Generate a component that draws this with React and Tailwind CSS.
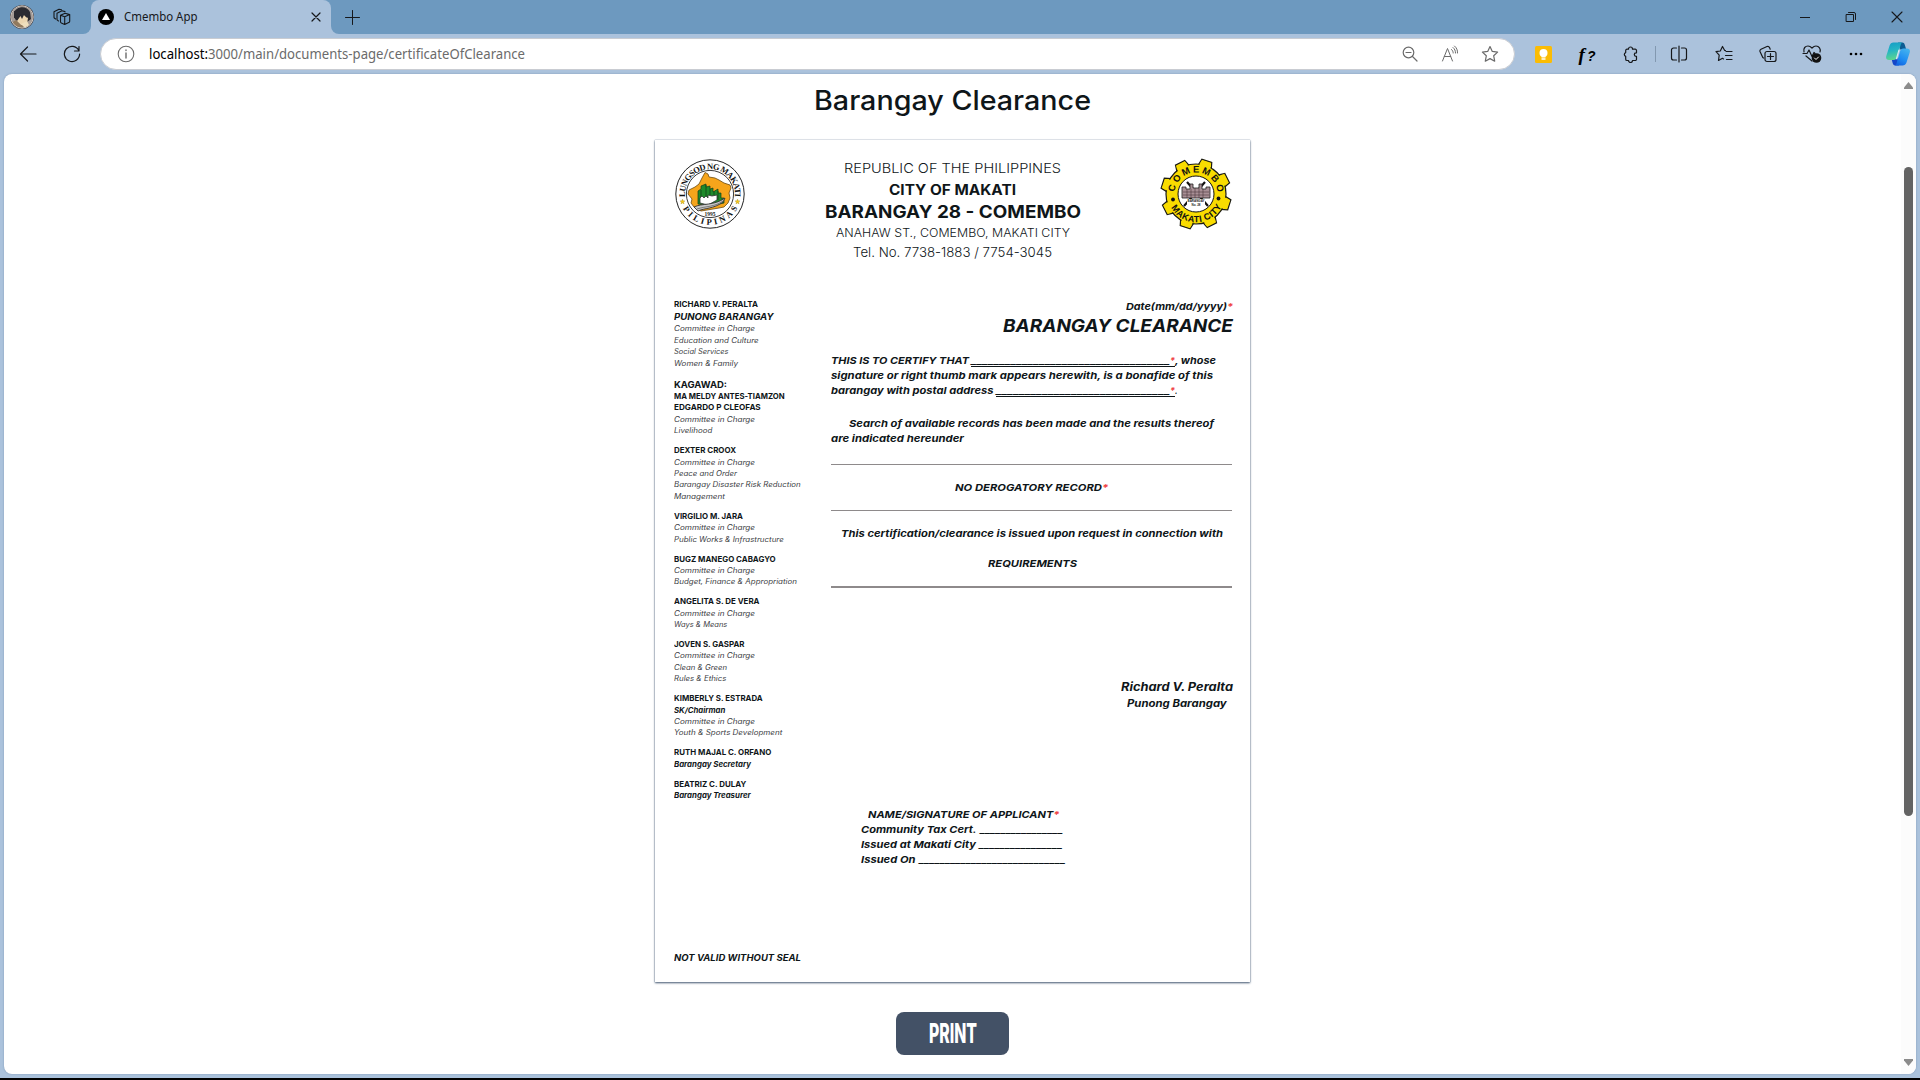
import React, { useLayoutEffect, useRef, useState } from "react";

/* Sets a run of text to an exact advance width by stretching it horizontally. */
function Fit({ w, children, className = "", right = false }) {
  const ref = useRef(null);
  const [k, setK] = useState(1);
  useLayoutEffect(() => {
    const natural = ref.current.getBoundingClientRect().width / k;
    if (natural > 0) setK(w / natural);
  }, [w]);
  return (
    <span className={"block whitespace-nowrap " + (right ? "ml-auto " : "") + className} style={{ width: w }}>
      <span ref={ref} className="inline-block origin-left align-top" style={{ transform: `scaleX(${k})` }}>
        {children}
      </span>
    </span>
  );
}

const Star = () => <span className="text-[#ef4444]">*</span>;

const CIC = ["c", "Committee in Charge", 81];
const officials = [
  [
    ["n", "RICHARD V. PERALTA", 84],
    ["p", "PUNONG BARANGAY", 99.5],
    CIC,
    ["c", "Education and Culture", 84.7],
    ["c", "Social Services", 54.5],
    ["c", "Women & Family", 64],
  ],
  [
    ["k", "KAGAWAD:", 53],
    ["n", "MA MELDY ANTES-TIAMZON", 110.7],
    ["n", "EDGARDO P CLEOFAS", 86.7],
    CIC,
    ["c", "Livelihood", 38.3],
  ],
  [
    ["n", "DEXTER CROOX", 62],
    CIC,
    ["c", "Peace and Order", 63],
    ["c", "Barangay Disaster Risk Reduction", 126.7],
    ["c", "Management", 51],
  ],
  [["n", "VIRGILIO M. JARA", 69], CIC, ["c", "Public Works & Infrastructure", 109.7]],
  [["n", "BUGZ MANEGO CABAGYO", 101.7], CIC, ["c", "Budget, Finance & Appropriation", 123]],
  [["n", "ANGELITA S. DE VERA", 85.5], CIC, ["c", "Ways & Means", 53.3]],
  [["n", "JOVEN S. GASPAR", 70.5], CIC, ["c", "Clean & Green", 53], ["c", "Rules & Ethics", 52.3]],
  [
    ["n", "KIMBERLY S. ESTRADA", 88.7],
    ["i", "SK/Chairman", 51.3],
    CIC,
    ["c", "Youth & Sports Development", 108.3],
  ],
  [["n", "RUTH MAJAL C. ORFANO", 97.3], ["i", "Barangay Secretary", 77]],
  [["n", "BEATRIZ C. DULAY", 72.3], ["i", "Barangay Treasurer", 76.7]],
];

const lineStyles = {
  n: "h-[11.4px] leading-[11.4px] text-[7.5px] font-bold",
  p: "h-[13.5px] leading-[13.5px] text-[8.8px] font-bold italic",
  k: "h-[13.5px] leading-[13.5px] text-[8.8px] font-bold",
  c: "h-[11.4px] leading-[11.4px] text-[7.3px] italic text-[#3d4145]",
  i: "h-[11.4px] leading-[11.4px] text-[7.4px] font-bold italic",
};

function Ic({ size = 18, children, className = "", sw = 1.2 }) {
  return (
    <svg
      width={size}
      height={size}
      viewBox={`0 0 ${size} ${size}`}
      fill="none"
      stroke="currentColor"
      strokeWidth={sw}
      strokeLinecap="round"
      strokeLinejoin="round"
      className={"block shrink-0 " + className}
    >
      {children}
    </svg>
  );
}

const Avatar = () => (
  <svg width="24" height="24" viewBox="0 0 24 24" className="block">
    <defs>
      <clipPath id="av"><circle cx="12" cy="12" r="10.8" /></clipPath>
    </defs>
    <circle cx="12" cy="12" r="12" fill="#3c3638" />
    <g clipPath="url(#av)">
      <rect width="24" height="24" fill="#a59c97" />
      <path d="M4 8C6 1 17 0 20 7l1 7-4 3-3-5-5 2-5-1z" fill="#2b2b31" />
      <path d="M6 11l7-2 5 4-1 6-5 2-5-5z" fill="#ecd6b0" />
      <path d="M4 6l12-2 3 8-2.500.5L14 10l-2 4-1.500-3L7 16l-2-2z" fill="#2b2b31" />
      <path d="M0 19l6-4 5 5 6-1 3 5H1z" fill="#917a5e" />
      <path d="M11 19l6-3 2 4-4 3z" fill="#efdfbd" />
    </g>
    <circle cx="12" cy="12" r="11.2" fill="none" stroke="#cfc8c2" strokeWidth="1" />
  </svg>
);

const Copilot = () => (
  <svg width="24" height="24" viewBox="0 0 24 24" className="block">
    <defs>
      <linearGradient id="cp1" x1="0" y1="0" x2="0.2" y2="1">
        <stop offset="0" stopColor="#149cc6" /><stop offset="0.5" stopColor="#25b5c4" /><stop offset="1" stopColor="#5bd490" />
      </linearGradient>
      <linearGradient id="cp2" x1="0.8" y1="0" x2="0.3" y2="1">
        <stop offset="0" stopColor="#45b4ee" /><stop offset="0.6" stopColor="#1f8df2" /><stop offset="1" stopColor="#1263e0" />
      </linearGradient>
    </defs>
    <path d="M12 0.500h4c2 0 2.500 1 3 3l1.200 4h-6z" fill="#0b5c93" />
    <path d="M13 23.500H9.500c-2 0-2.500-1-3-3l-1-4h6z" fill="#1546c8" />
    <path d="M7.500 0.500H17c-1.500 0-2 1.200-2.500 3L11 15c-.6 2-1.500 3-3.500 3H3c-2.500 0-3.400-1.600-2.700-4L3.600 3.500C4.300 1.500 5.500.5 7.500.5z" fill="url(#cp1)" />
    <path d="M16.500 23.500H8c1.500 0 2.300-1 2.800-3L14 9.500C14.600 7.400 15.500 6.500 17.500 6.500H21c2.500 0 3.400 1.500 2.700 4l-3.200 10c-.7 2-2 3-4 3z" fill="url(#cp2)" />
    <path d="M13.500 8l-2.800 9.500L9.800 17 12.500 7.500z" fill="#d8ecf8" />
  </svg>
);

const MakatiSeal = () => (
  <svg width="70" height="70" viewBox="-35 -35 70 70" className="block">
    <defs>
      <path id="mkTop" d="M-24.700 4A25 25 0 1 1 24.700 4" />
      <path id="mkBot" d="M-30 7A30.800 30.800 0 0 0 30 7" />
    </defs>
    <circle r="34.200" fill="#fff" stroke="#222" strokeWidth="1" />
    <circle r="23.600" fill="#fff" stroke="#222" strokeWidth="0.900" />
    <path d="M-5-21.500l3 1.500 1 3 6 1 4 2 5 3 6 2 1 3-2 5 1 5-2 5-4 4-5 1-18 3-7-4-3-4 1-4-4-5 1-4 6-3 4-3 3-6z" fill="#f6a51b" stroke="#6b4a10" strokeWidth="0.800" />
    <path d="M-12 10V-3l3-2V-8l5-2v3l4-1v3l3-1v4l5-3v4h3v5h3v5L0 12z" fill="#1f8a2b" stroke="#143d17" strokeWidth="0.700" />
    <path d="M-9-4V7M-4-9V6M0-5V6M4-3V6M8-3V6" stroke="#12511a" strokeWidth="1" />
    <path d="M-10 9V4l2-2 2 2 2-2 2 2v-3l4 1 5-1v5l-9 5z" fill="#fff" stroke="#333" strokeWidth="0.800" />
    <path d="M-16 13C-8 9 4 12 15 4l-2 4C4 15-6 14-12 17z" fill="#c9c9c9" stroke="#333" strokeWidth="0.900" />
    <path d="M-13 15C-4 12 5 13 13 7" fill="none" stroke="#444" strokeWidth="0.600" />
    <text y="21.500" textAnchor="middle" className="font-['Liberation_Serif'] text-[5.500px] font-bold" fill="#222">1995</text>
    <text className="font-['Liberation_Serif'] text-[8.500px] font-bold" fill="#111">
      <textPath href="#mkTop" startOffset="1" textLength="84" lengthAdjust="spacing">LUNGSOD NG MAKATI</textPath>
    </text>
    <text className="font-['Liberation_Serif'] text-[8.500px] font-bold" fill="#111">
      <textPath href="#mkBot" startOffset="8" textLength="67" lengthAdjust="spacing">PILIPINAS</textPath>
    </text>
    {[-27.500, 27.500].map((x) => (
      <path key={x} transform={`translate(${x} 7.500)`} d="M0-2.400l.7 1.700 1.800.1-1.400 1.200.5 1.800L0 1.400l-1.600 1 .5-1.800-1.400-1.200 1.800-.1z" fill="#f4c81e" stroke="#9a7c10" strokeWidth="0.300" />
    ))}
  </svg>
);

const TEETH = [18, 63, 108, 153, 198, 243, 288, 333];

const ComemboSeal = () => (
  <svg width="72" height="72" viewBox="-36 -36 72 72" className="block">
    <defs>
      <path id="cbTop" d="M-21.500 0A21.500 21.500 0 0 1 21.500 0" />
      <path id="cbBot" d="M-28.300 0A28.300 28.300 0 0 0 28.300 0" />
    </defs>
    <g fill="#f9dc00" stroke="#1c1c14" strokeWidth="1.200">
      {TEETH.map((a) => (
        <path key={a} transform={`rotate(${a})`} d="M-7-28L-5.200-35H5.200L7-28" />
      ))}
      <circle r="30" />
    </g>
    {TEETH.map((a) => (
      <path key={a} transform={`rotate(${a})`} d="M-6-27L-4.800-34H4.800L6-27z" fill="#f9dc00" />
    ))}
    <circle r="18" fill="#fff" stroke="#111" strokeWidth="1" />
    <path d="M-9-12L12 12M9-12L-12 12" stroke="#111" strokeWidth="2.200" />
    <path d="M-14-7h4v2h4v-5h3v4h6v-4h3v5h4v-2h4v11h-28z" fill="#a88f95" stroke="#222" strokeWidth="0.800" />
    <path d="M-13-2h26M-13 1h26M-9-5v9M-5-5v9M-1-6v10M3-6v10M7-5v9" stroke="#4a383e" strokeWidth="0.600" />
    <path d="M-9 5H9V14H-9z" fill="#fff" />
    <text y="8.300" textAnchor="middle" className="font-['Liberation_Sans'] text-[3px] font-bold" fill="#222">BARANGAY</text>
    <text y="12.300" textAnchor="middle" className="font-['Liberation_Sans'] text-[3px] font-bold" fill="#222">No. 28</text>
    <text className="font-['Liberation_Sans'] text-[9.500px] font-bold" fill="#111">
      <textPath href="#cbTop" startOffset="2" textLength="63.500" lengthAdjust="spacing">COMEMBO</textPath>
    </text>
    <text className="font-['Liberation_Sans'] text-[9px] font-bold" fill="#111">
      <textPath href="#cbBot" startOffset="14" textLength="62" lengthAdjust="spacing">MAKATI CITY</textPath>
    </text>
    <circle cx="-23" cy="5.500" r="1.900" fill="#111" />
    <circle cx="22.500" cy="4.500" r="1.900" fill="#111" />
  </svg>
);

const Cell = ({ children, className = "w-11" }) => (
  <div className={"flex h-10 shrink-0 items-center justify-center " + className}>{children}</div>
);

function BrowserChrome() {
  return (
    <header className="font-['Noto_Sans',sans-serif] text-[#16181b]">
      <div className="flex h-[34px] bg-[#6d99bf]">
        <div className="flex w-[91px] items-center bg-[#abc2dc]">
          <div className="flex h-full w-full items-center rounded-br-lg bg-[#6d99bf] pl-[10px]">
            <Avatar />
            <Ic className="ml-[19px]" sw={1.1}>
              <path d="M7.500 7.200l4.200 1.600 5-2.200v6.600a1.500 1.500 0 0 1-1 1.400l-4 1.800-3.400-1.500a1.300 1.300 0 0 1-.8-1.200zM11.700 8.800v7.400M7.500 7.200l4.600-2 4.600 1.400M5.500 13l-.9-.6a1.300 1.300 0 0 1-.6-1.100V5.300l5-2.500 3 .8M2.600 11l-1-.7A1.300 1.300 0 0 1 1 9.200V3.800l5-2.600 2.500.5" />
            </Ic>
          </div>
        </div>
        <div className="flex w-60 items-center rounded-t-lg bg-[#abc2dc] pl-[7px]">
          <svg width="16" height="16" viewBox="0 0 16 16"><circle cx="8" cy="8" r="8" fill="#000" /><path d="M8 4l4 7H4z" fill="#fff" /></svg>
          <Fit w={73.5} className="ml-[10px] text-[12px]">Cmembo App</Fit>
          <Ic size={10} className="ml-[113px]"><path d="M1 1l8 8M9 1L1 9" /></Ic>
        </div>
        <div className="flex flex-1 bg-[#abc2dc]">
          <div className="flex flex-1 items-center rounded-bl-lg bg-[#6d99bf] pl-[14px]">
            <Ic size={15}><path d="M7.500 .5v14M.5 7.500h14" strokeWidth="1" /></Ic>
            <div className="ml-auto flex">
              <Cell className="w-[46px]"><Ic size={10} sw={1}><path d="M0 5.500h10" /></Ic></Cell>
              <Cell className="w-[46px]"><Ic size={12} sw={1}><path d="M1.500 3.500h7v7h-7zM3.500 1.500h5.500a1.500 1.500 0 0 1 1.500 1.500v5.500" /></Ic></Cell>
              <Cell className="w-[46px]"><Ic size={12} sw={1.1}><path d="M1 1l10 10M11 1L1 11" /></Ic></Cell>
            </div>
          </div>
        </div>
      </div>
      <div className="flex h-10 bg-[#abc2dc] pl-[6px]">
        <Cell><Ic className="-mt-px"><path d="M17 9H1.500M8.500 2L1.500 9l7 7" /></Ic></Cell>
        <Cell><Ic className="-mt-px"><path d="M15.800 5.500A7.600 7.600 0 1 0 16.600 9M16 1.500v4.500h-4.500" /></Ic></Cell>
        <div className="mt-1 ml-[6px] flex h-8 w-[1415px] items-center rounded-full border border-[#c9ccd2] bg-white pl-4 text-[#6b6b6b]">
          <Ic sw={1.1}><circle cx="9" cy="9" r="7.800" /><path d="M9 8v5M9 5v.5" strokeWidth="1.400" /></Ic>
          <Fit w={376} className="-mt-px ml-[14px] text-[14px]">
            <span className="text-black">localhost:</span>3000/main/documents-page/certificateOfClearance
          </Fit>
          <div className="ml-auto flex pr-1">
            <Cell className="w-10"><Ic size={16}><circle cx="6.500" cy="6.500" r="5.300" /><path d="M10.500 10.500l4.500 4.500M4 6.500h5" /></Ic></Cell>
            <Cell className="w-10"><Ic size={18} sw={1}><path d="M1.500 16L6.500 3.500 11.500 16M3.300 11.500h6.400M10.500 4.500c1.200 1 1.700 2.200 1.700 3.500M12 2.500c1.800 1.500 2.500 3.300 2.500 5.500M13.500 1c2.200 1.800 3.200 4.200 3 7" /></Ic></Cell>
            <Cell className="w-10"><Ic size={18}><path d="M9 1.500l2.300 4.900 5.300.7-3.900 3.700 1 5.400L9 13.600l-4.700 2.600 1-5.400L1.400 7.100l5.300-.7z" /></Ic></Cell>
          </div>
        </div>
        <div className="flex pl-1.5">
          <Cell>
            <svg width="17" height="17" viewBox="0 0 17 17"><rect width="17" height="17" rx="1.500" fill="#fbbc04" /><circle cx="8.500" cy="7" r="4" fill="#fff" /><path d="M6.500 9h4v2.500h-4zM6.500 12.300h4v1.500h-4z" fill="#fff" /></svg>
          </Cell>
          <Cell><span className="font-['Liberation_Serif',serif] text-[19px] leading-none font-bold italic text-black">f<span className="ml-[2px] font-['Liberation_Sans'] text-[14px] font-bold">?</span></span></Cell>
          <Cell><Ic><path d="M6.500 4.200V4a2 2 0 0 1 4 0v.2h2.700a1.300 1.300 0 0 1 1.300 1.300v2.300h-.4a1.800 1.800 0 0 0 0 3.600h.4v2.800a1.300 1.300 0 0 1-1.300 1.300h-2.700a2 2 0 0 1-4 0H5a1.300 1.300 0 0 1-1.300-1.300v-2.800a2 2 0 0 1 0-3.800V5.500A1.300 1.300 0 0 1 5 4.200z" /></Ic></Cell>
          <Cell className="w-1"><div className="h-4 w-px bg-[#8298b0]" /></Cell>
          <Cell><Ic><path d="M6.500 3H3.500a2 2 0 0 0-2 2v8a2 2 0 0 0 2 2h3M11.500 3h3a2 2 0 0 1 2 2v8a2 2 0 0 1-2 2h-3M9 1v16" /></Ic></Cell>
          <Cell className="w-[45px]"><Ic><path d="M10.500 5.500h-.8L7.500 1.500 5.300 6 1 6.700l3.200 3.400-.7 5.400 4-2.200 1 .6M11 6.500h6M10.500 10.500h6.500M11.500 14.500H17" /></Ic></Cell>
          <Cell className="w-11"><Ic><path d="M4.500 13l-.7-.5L1 6.500a2 2 0 0 1 1-2.300l6-2.700a2 2 0 0 1 2.500 1l.7 1.700M8 6.500h7a2 2 0 0 1 2 2v6a2 2 0 0 1-2 2H8a2 2 0 0 1-2-2v-6a2 2 0 0 1 2-2zM11.500 8.500v6M8.500 11.500h6" /></Ic></Cell>
          <Cell>
            <Ic size={20}><path d="M2 8C1 4 3.500 2 6 2c2 0 3 1 4 2 1-1 2-2 4-2 3 0 5 3 4 6M1 9.500h4l2-3.500 3 6.500 2-4 1 1M4 12l6 5" /><circle cx="14.500" cy="14" r="4.800" fill="#111" stroke="none" /><path d="M12.500 14l1.500 1.500 2.500-2.500" stroke="#fff" strokeWidth="1" /></Ic>
          </Cell>
          <Cell className="w-[43px]"><svg width="14" height="4"><circle cx="2" cy="2" r="1.300" /><circle cx="7" cy="2" r="1.300" /><circle cx="12" cy="2" r="1.300" /></svg></Cell>
          <Cell className="w-[42px]"><Copilot /></Cell>
        </div>
      </div>
    </header>
  );
}

function Officials() {
  return (
    <aside className="flex w-[157px] shrink-0 flex-col gap-[8.600px] pt-[1.500px]">
      {officials.map((block, i) => (
        <div key={i}>
          {block.map(([kind, text, w], j) => (
            <Fit key={j} w={w} className={lineStyles[kind]}>{text}</Fit>
          ))}
        </div>
      ))}
    </aside>
  );
}

function Certificate() {
  return (
    <section className="w-[402px] text-[9.600px] leading-[15px] font-bold italic">
      <Fit w={107} right className="mt-[2px] h-[15px]">Date(mm/dd/yyyy)<Star /></Fit>
      <Fit w={230} right className="h-[23px] text-[17.500px] leading-[23px]">BARANGAY CLEARANCE</Fit>

      <div className="mt-[16px]">
        <div className="flex">
          <Fit w={138}>THIS IS TO CERTIFY THAT</Fit>
          <Fit w={199} className="ml-[2px]"><span className="underline decoration-1 underline-offset-[2px] [text-decoration-skip-ink:none]">___________________________________</span></Fit>
          <Fit w={5}><span className="underline decoration-1 underline-offset-[2px]"><Star /></span></Fit>
          <Fit w={41}>, whose</Fit>
        </div>
        <Fit w={382}>signature or right thumb mark appears herewith, is a bonafide of this</Fit>
        <div className="flex">
          <Fit w={162.5}>barangay with postal address</Fit>
          <Fit w={174} className="ml-[2px]"><span className="underline decoration-1 underline-offset-[2px] [text-decoration-skip-ink:none]">______________________________</span></Fit>
          <Fit w={5}><span className="underline decoration-1 underline-offset-[2px]"><Star /></span></Fit>
          <Fit w={2.5}>.</Fit>
        </div>
      </div>

      <div className="mt-[18px]">
        <Fit w={365} className="ml-[18px]">Search of available records has been made and the results thereof</Fit>
        <Fit w={133}>are indicated hereunder</Fit>
      </div>

      <hr className="mt-[18px] mr-px h-px border-0 bg-[#8e8a8b]" />
      <Fit w={153.3} className="mx-auto mt-[15px]">NO DEROGATORY RECORD<Star /></Fit>
      <hr className="mt-[15px] mr-px h-px border-0 bg-[#8e8a8b]" />
      <Fit w={382} className="mx-auto mt-[15px]">This certification/clearance is issued upon request in connection with</Fit>
      <Fit w={89} className="mx-auto mt-[15px]">REQUIREMENTS</Fit>
      <hr className="mt-[15px] mr-px h-0.5 border-0 bg-[#8e8a8b]" />

      <Fit w={112} right className="mt-[90px] h-[18px] text-[11.500px] leading-[18px]">Richard V. Peralta</Fit>
      <Fit w={99.7} right className="mr-[6px] text-[10px]">Punong Barangay</Fit>

      <div className="mt-[96px] ml-[30px]">
        <Fit w={191.5} className="ml-[7px]">NAME/SIGNATURE OF APPLICANT<Star /></Fit>
        <div className="flex gap-[3.500px]"><Fit w={115.5}>Community Tax Cert.</Fit><Fit w={83}>________________</Fit></div>
        <div className="flex gap-[3px]"><Fit w={115}>Issued at Makati City</Fit><Fit w={83.5}>________________</Fit></div>
        <div className="flex gap-[3px]"><Fit w={54.5}>Issued On</Fit><Fit w={146.5}>____________________________</Fit></div>
      </div>
    </section>
  );
}

export default function App() {
  return (
    <div className="flex h-[1080px] w-[1920px] flex-col overflow-hidden bg-[#abc2dc]">
      <BrowserChrome />
      <div className="mx-1 flex h-[1000px] overflow-hidden rounded-lg bg-white shadow-[0_0_2px_#7d96b3]">
        <main className="flex w-[1897px] flex-col items-center font-['Inter',sans-serif] text-[#0f1619]">
          <Fit w={277} className="mt-[7px] h-10 text-[27px] leading-10 font-medium">Barangay Clearance</Fit>
          <article className="mt-[19px] flex h-[842px] w-[595px] flex-col bg-white pl-[19px] shadow-[0_1px_2px_#475a73,0_0_1px_#7f8ca3]">
            <div className="flex items-start pt-[18px]">
              <div className="mt-px ml-px"><MakatiSeal /></div>
              <div className="mx-auto flex flex-col items-center">
                <Fit w={217} className="h-[21px] text-[13.500px] leading-[21px] font-light">REPUBLIC OF THE PHILIPPINES</Fit>
                <Fit w={127} className="h-[22px] text-[14px] leading-[22px] font-bold">CITY OF MAKATI</Fit>
                <Fit w={256} className="h-[22px] text-[17.500px] leading-[22px] font-bold">BARANGAY 28 - COMEMBO</Fit>
                <Fit w={234} className="h-[19px] text-[12px] leading-[19px] font-light">ANAHAW ST., COMEMBO, MAKATI CITY</Fit>
                <Fit w={199} className="h-[20.500px] text-[13.500px] leading-[20.500px] font-light">Tel. No. 7738-1883 / 7754-3045</Fit>
              </div>
              <div className="mr-[18px]"><ComemboSeal /></div>
            </div>
            <div className="mt-[34.500px] flex">
              <Officials />
              <Certificate />
            </div>
            <Fit w={127} className="mt-auto mb-[17px] h-[14px] text-[8.600px] leading-[14px] font-bold italic">NOT VALID WITHOUT SEAL</Fit>
          </article>
          <button className="mt-[30px] flex h-[43px] w-[113px] items-center justify-center rounded-lg bg-[#435166] text-white">
            <Fit w={48} className="text-[27px] leading-[43px] font-extrabold">PRINT</Fit>
          </button>
        </main>
        <div className="flex w-[15px] flex-col items-center bg-[#fcfcfc] py-2">
          <svg width="9" height="7"><path d="M4.500 0L9 5.500V7H0V5.500z" fill="#8b8b8b" /></svg>
          <div className="mt-[78px] h-[649px] w-[9px] rounded-full bg-[#636363]" />
          <svg width="9" height="7" className="mt-auto"><path d="M4.500 7L9 1.500V0H0V1.500z" fill="#8b8b8b" /></svg>
        </div>
      </div>
      <div className="mt-auto h-0.5 bg-black" />
    </div>
  );
}
